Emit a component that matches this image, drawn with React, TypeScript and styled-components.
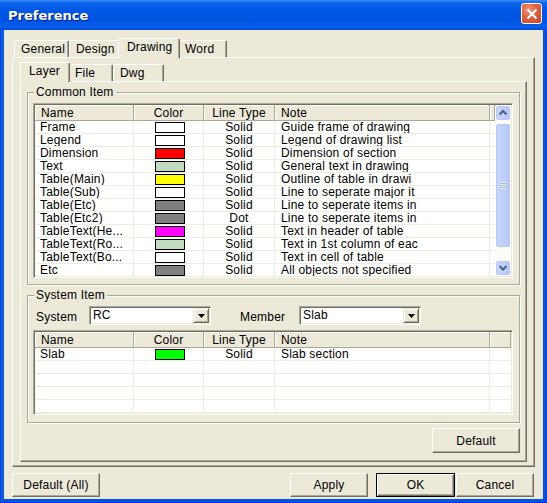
import styled, { createGlobalStyle, css } from "styled-components";

const FACE = "#ECE9D8";
const SHADOW = "#ACA899";
const DARK = "#716F64";
const GRID = "#EFEDE3";

type Item = { name: string; color: string; line: string; note: string };
type Align = "left" | "center";
type Column = { key: keyof Item; title: string; width: number; align: Align; pad: number };

const commonItems: Item[] = [
  { name: "Frame", color: "#FFFFFF", line: "Solid", note: "Guide frame of drawing" },
  { name: "Legend", color: "#FFFFFF", line: "Solid", note: "Legend of drawing list" },
  { name: "Dimension", color: "#FF0000", line: "Solid", note: "Dimension of section" },
  { name: "Text", color: "#C0DCC0", line: "Solid", note: "General text in drawing" },
  { name: "Table(Main)", color: "#FFFF00", line: "Solid", note: "Outline of table in drawi" },
  { name: "Table(Sub)", color: "#FFFFFF", line: "Solid", note: "Line to seperate major it" },
  { name: "Table(Etc)", color: "#808080", line: "Solid", note: "Line to seperate items in" },
  { name: "Table(Etc2)", color: "#808080", line: "Dot", note: "Line to seperate items in" },
  { name: "TableText(He...", color: "#FF00FF", line: "Solid", note: "Text in header of table" },
  { name: "TableText(Ro...", color: "#C0DCC0", line: "Solid", note: "Text in 1st column of eac" },
  { name: "TableText(Bo...", color: "#FFFFFF", line: "Solid", note: "Text in cell of table" },
  { name: "Etc", color: "#808080", line: "Solid", note: "All objects not specified" },
];

const systemItems: Item[] = [
  { name: "Slab", color: "#00FF00", line: "Solid", note: "Slab section" },
];

const columns: Column[] = [
  { key: "name", title: "Name", width: 99, align: "left", pad: 5 },
  { key: "color", title: "Color", width: 70, align: "center", pad: 0 },
  { key: "line", title: "Line Type", width: 71, align: "center", pad: 0 },
  { key: "note", title: "Note", width: 215, align: "left", pad: 6 },
];

const ChevronIcon = ({ down }: { down?: boolean }) => (
  <svg width="14" height="14" viewBox="0 0 14 14">
    <polyline
      points={down ? "3.5,5 7,8.5 10.5,5" : "3.5,8.5 7,5 10.5,8.5"}
      fill="none"
      stroke="#4D6185"
      strokeWidth="2"
    />
  </svg>
);

const LayerList = ({
  items,
  rows,
  height,
  scroll,
}: {
  items: Item[];
  rows: number;
  height: number;
  scroll?: boolean;
}) => {
  const blanks = Array.from({ length: Math.max(0, rows - items.length) });
  return (
    <ListFrame $h={height}>
      <ListBody>
        <HeaderRow>
          {columns.map((c) => (
            <HeaderCell key={c.key} $w={c.width} $align={c.align}>
              {c.title}
            </HeaderCell>
          ))}
          <HeaderFill />
        </HeaderRow>
        {items.map((it, i) => (
          <Row key={i}>
            {columns.map((c) => (
              <Cell key={c.key} $w={c.width} $align={c.align} $pad={c.pad}>
                {c.key === "color" ? <Swatch $c={it.color} /> : it[c.key]}
              </Cell>
            ))}
            <RowFill />
          </Row>
        ))}
        {blanks.map((_, i) => (
          <Row key={"b" + i}>
            {columns.map((c) => (
              <Cell key={c.key} $w={c.width} $align={c.align} $pad={c.pad} />
            ))}
            <RowFill />
          </Row>
        ))}
      </ListBody>
      {scroll && (
        <ScrollBar>
          <ScrollButton>
            <ChevronIcon />
          </ScrollButton>
          <Thumb>
            <Grip />
          </Thumb>
          <Track />
          <ScrollButton>
            <ChevronIcon down />
          </ScrollButton>
        </ScrollBar>
      )}
    </ListFrame>
  );
};

const Combo = ({ value }: { value: string }) => (
  <ComboBox>
    <ComboText>{value}</ComboText>
    <DropButton>
      <svg width="7" height="4" viewBox="0 0 7 4">
        <polygon points="0,0 7,0 3.5,4" fill="#000" />
      </svg>
    </DropButton>
  </ComboBox>
);

export default function App() {
  return (
    <>
      <GlobalStyle />
      <Window>
        <TitleBar>
          <Title>Preference</Title>
          <CloseButton>
            <svg width="12" height="12" viewBox="0 0 12 12">
              <path d="M1.5 1.5 L10.5 10.5 M10.5 1.5 L1.5 10.5" stroke="#fff" strokeWidth="2.2" />
            </svg>
          </CloseButton>
        </TitleBar>
        <Client>
          <TabStrip>
            <Tab $w={55}>General</Tab>
            <Tab $w={51}>Design</Tab>
            <Tab $w={58} $active>
              Drawing
            </Tab>
            <Tab $w={49}>Word</Tab>
          </TabStrip>
          <OuterPane>
            <TabStrip>
              <Tab $w={46} $active>
                Layer
              </Tab>
              <Tab $w={45}>File</Tab>
              <Tab $w={51}>Dwg</Tab>
            </TabStrip>
            <InnerPane>
              <Group>
                <GroupLabel>Common Item</GroupLabel>
                <LayerList items={commonItems} rows={12} height={175} scroll />
              </Group>
              <Group $gap={10} $bottom={7}>
                <GroupLabel>System Item</GroupLabel>
                <SystemRow>
                  <FieldLabel $w={53}>System</FieldLabel>
                  <Combo value="RC" />
                  <FieldLabel $w={59} $ml={29}>
                    Member
                  </FieldLabel>
                  <Combo value="Slab" />
                </SystemRow>
                <LayerList items={systemItems} rows={5} height={85} />
              </Group>
              <DefaultRow>
                <Button $w={88} $h={25}>
                  Default
                </Button>
              </DefaultRow>
            </InnerPane>
          </OuterPane>
          <ButtonBar>
            <Button $w={88}>Default (All)</Button>
            <Spacer />
            <Button $w={78}>Apply</Button>
            <Button $w={79} $default>
              OK
            </Button>
            <Button $w={78}>Cancel</Button>
          </ButtonBar>
        </Client>
      </Window>
    </>
  );
}

const GlobalStyle = createGlobalStyle`
  html, body {
    margin: 0;
    padding: 0;
    background: #ffffff;
  }
  body {
    font-family: "Liberation Sans", Arial, sans-serif;
    font-size: 12px;
    letter-spacing: 0.2px;
    color: #000;
  }
`;

const Window = styled.div`
  width: 547px;
  height: 503px;
  display: flex;
  flex-direction: column;
  background: linear-gradient(
    90deg,
    #0831d9 0,
    #0a4fdf 1px,
    #1666ee 2px,
    #0055e5 3px,
    #0055e5 calc(100% - 3px),
    #0a4ad8 calc(100% - 1px),
    #0831d9 100%
  );
  border-bottom: 1px solid #0831d9;
  box-sizing: border-box;
  overflow: hidden;
`;

const TitleBar = styled.div`
  height: 30px;
  flex: none;
  display: flex;
  align-items: center;
  justify-content: space-between;
  padding: 0 5px 0 8px;
  background: linear-gradient(
    180deg,
    #3d8ff8 0,
    #0d63ea 3px,
    #0058e6 10px,
    #0054e3 20px,
    #0a5eec 27px,
    #004bd6 30px
  );
`;

const Title = styled.span`
  font-family: "DejaVu Sans", "Liberation Sans", sans-serif;
  font-weight: bold;
  font-size: 13px;
  letter-spacing: 0;
  color: #fff;
  text-shadow: 1px 1px 0 #0a1883;
`;

const CloseButton = styled.div`
  width: 21px;
  height: 21px;
  box-sizing: border-box;
  border: 1px solid #fff;
  border-radius: 3px;
  background: radial-gradient(circle at 35% 30%, #f0937a 0, #e1603d 45%, #c8431e 100%);
  display: flex;
  align-items: center;
  justify-content: center;
  margin-top: -3px;
`;

const Client = styled.div`
  flex: 1;
  margin: 0 4px 3px;
  background: ${FACE};
  display: flex;
  flex-direction: column;
  padding: 8px 8px 2px;
`;

const TabStrip = styled.div`
  display: flex;
  align-items: flex-end;
  height: 19px;
  flex: none;
  padding-left: 2px;
`;

const Tab = styled.div<{ $active?: boolean; $w: number }>`
  box-sizing: border-box;
  width: ${(p) => p.$w}px;
  height: 17px;
  padding-left: 6px;
  display: flex;
  align-items: center;
  white-space: nowrap;
  background: ${FACE};
  border: 1px solid #fff;
  border-right-color: ${DARK};
  border-bottom: none;
  border-radius: 2px 2px 0 0;
  box-shadow: inset -1px 0 ${SHADOW};
  ${(p) =>
    p.$active &&
    css`
      position: relative;
      z-index: 1;
      height: 20px;
      margin: 0 -2px -1px;
      width: ${p.$w + 4}px;
      padding-left: 8px;
      padding-bottom: 3px;
    `}
`;

const paneBorder = css`
  box-sizing: border-box;
  border: 1px solid;
  border-color: #fff ${DARK} ${DARK} #fff;
  box-shadow: inset -1px -1px ${SHADOW};
`;

const OuterPane = styled.div`
  ${paneBorder};
  height: 410px;
  flex: none;
  padding: 4px 7px;
  display: flex;
  flex-direction: column;
`;

const InnerPane = styled.div`
  ${paneBorder};
  height: 381px;
  flex: none;
  padding: 10px 6px 7px;
  display: flex;
  flex-direction: column;
`;

const Group = styled.div<{ $gap?: number; $bottom?: number }>`
  margin-top: ${(p) => p.$gap ?? 0}px;
  border: 1px solid ${SHADOW};
  box-shadow: inset 1px 1px #fff, 1px 1px #fff;
  padding: 0 6px ${(p) => p.$bottom ?? 6}px 5px;
`;

const GroupLabel = styled.div`
  display: table;
  margin: -8px 0 4px 1px;
  padding: 0 2px;
  line-height: 14px;
  background: ${FACE};
`;

const SystemRow = styled.div`
  display: flex;
  align-items: center;
  height: 19px;
  margin: 1px 0 5px;
  padding-left: 3px;
`;

const FieldLabel = styled.span<{ $w: number; $ml?: number }>`
  width: ${(p) => p.$w}px;
  margin-left: ${(p) => p.$ml ?? 0}px;
  padding-top: 2px;
`;

const ComboBox = styled.div`
  box-sizing: border-box;
  width: 122px;
  height: 19px;
  display: flex;
  background: #fff;
  border: 1px solid;
  border-color: ${SHADOW} #fff #fff ${SHADOW};
  box-shadow: inset 1px 1px ${DARK}, inset -1px -1px ${FACE};
  padding: 1px;
`;

const ComboText = styled.span`
  flex: 1;
  padding-left: 2px;
  line-height: 15px;
`;

const DropButton = styled.div`
  box-sizing: border-box;
  width: 16px;
  height: 15px;
  background: ${FACE};
  border: 1px solid;
  border-color: ${FACE} ${DARK} ${DARK} ${FACE};
  box-shadow: inset 1px 1px #fff, inset -1px -1px ${SHADOW};
  display: flex;
  align-items: center;
  justify-content: center;
`;

const ListFrame = styled.div<{ $h: number }>`
  box-sizing: border-box;
  height: ${(p) => p.$h}px;
  display: flex;
  background: #fff;
  border: 1px solid;
  border-color: ${SHADOW} #fff #fff ${SHADOW};
  box-shadow: inset 1px 1px ${DARK}, inset -1px -1px ${FACE};
  padding: 1px;
`;

const ListBody = styled.div`
  flex: 1;
  min-width: 0;
  overflow: hidden;
`;

const HeaderRow = styled.div`
  display: flex;
  height: 16px;
  background: ${FACE};
`;

const headerCell = css`
  box-sizing: border-box;
  height: 16px;
  border-right: 1px solid ${SHADOW};
  border-bottom: 1px solid ${SHADOW};
  box-shadow: inset 1px 1px #fff;
`;

const HeaderCell = styled.div<{ $w: number; $align: Align }>`
  ${headerCell};
  width: ${(p) => p.$w}px;
  flex: none;
  display: flex;
  align-items: center;
  justify-content: ${(p) => (p.$align === "center" ? "center" : "flex-start")};
  padding-left: ${(p) => (p.$align === "center" ? 0 : 6)}px;
  white-space: nowrap;
`;

const HeaderFill = styled.div`
  ${headerCell};
  flex: 1;
`;

const Row = styled.div`
  display: flex;
  height: 13px;
`;

const Cell = styled.div<{ $w: number; $align: Align; $pad: number }>`
  box-sizing: border-box;
  width: ${(p) => p.$w}px;
  flex: none;
  height: 13px;
  border-right: 1px solid ${GRID};
  border-bottom: 1px solid ${GRID};
  display: flex;
  align-items: center;
  justify-content: ${(p) => (p.$align === "center" ? "center" : "flex-start")};
  padding-left: ${(p) => p.$pad}px;
  white-space: nowrap;
  overflow: hidden;
  line-height: 12px;
`;

const RowFill = styled.div`
  flex: 1;
  border-bottom: 1px solid ${GRID};
`;

const Swatch = styled.span<{ $c: string }>`
  display: block;
  box-sizing: border-box;
  width: 30px;
  height: 11px;
  margin-left: 2px;
  border: 1px solid #000;
  background: ${(p) => p.$c};
`;

const ScrollBar = styled.div`
  width: 16px;
  flex: none;
  display: flex;
  flex-direction: column;
  background: #fcfcf8;
`;

const blueButton = css`
  box-sizing: border-box;
  border: 1px solid #fff;
  border-radius: 3px;
  background: linear-gradient(90deg, #c9d8fd 0%, #bccefa 60%, #b2c6f6 100%);
  box-shadow: inset 0 0 0 1px #b5c9f4;
`;

const ScrollButton = styled.div`
  ${blueButton};
  height: 16px;
  flex: none;
  display: flex;
  align-items: center;
  justify-content: center;
`;

const Thumb = styled.div`
  ${blueButton};
  height: 125px;
  flex: none;
  margin-top: 2px;
  display: flex;
  align-items: center;
  justify-content: center;
`;

const Grip = styled.div`
  width: 6px;
  height: 7px;
  background: repeating-linear-gradient(180deg, #eef4fe 0 1px, #9ab7f3 1px 2px);
`;

const Track = styled.div`
  flex: 1;
`;

const DefaultRow = styled.div`
  display: flex;
  justify-content: flex-end;
  margin-top: 5px;
`;

const Button = styled.button<{ $w: number; $h?: number; $default?: boolean }>`
  box-sizing: border-box;
  width: ${(p) => p.$w}px;
  height: ${(p) => p.$h ?? 24}px;
  flex: none;
  padding: 0;
  font-family: "Liberation Sans", Arial, sans-serif;
  font-size: 12px;
  letter-spacing: 0.2px;
  color: #000;
  background: ${FACE};
  border: 1px solid;
  border-color: #fff ${DARK} ${DARK} #fff;
  box-shadow: inset -1px -1px ${SHADOW};
  ${(p) =>
    p.$default &&
    css`
      border: 1px solid #000;
      box-shadow: inset 1px 1px #fff, inset -1px -1px ${DARK}, inset -2px -2px ${SHADOW};
    `}
`;

const ButtonBar = styled.div`
  display: flex;
  gap: 1px;
  margin-top: 6px;
  padding-right: 1px;
  & > button:nth-child(3) {
    margin-right: 7px;
  }
`;

const Spacer = styled.div`
  flex: 1;
`;
